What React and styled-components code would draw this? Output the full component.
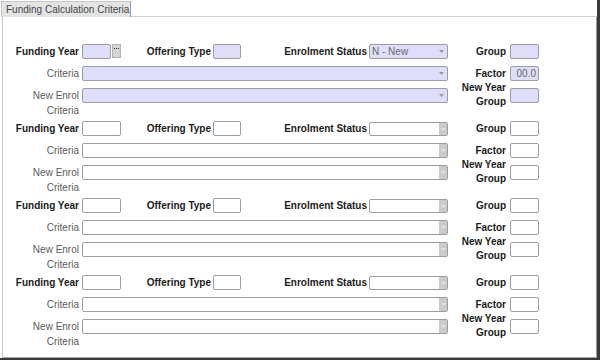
import React from "react";
import styled, { createGlobalStyle, css } from "styled-components";

const GlobalStyle = createGlobalStyle`
  html, body { margin: 0; padding: 0; background: #fff; }
  body { font-family: "Liberation Sans", Arial, sans-serif; }
`;

const Window = styled.div`
  width: 600px;
  height: 360px;
  box-sizing: border-box;
  border-right: 3px solid #3a3a3a;
  border-bottom: 2px solid #3a3a3a;
  padding: 1px 0 0 1px;
  display: flex;
  flex-direction: column;
  background: #fff;
`;

const TabStrip = styled.div`
  display: flex;
  height: 16px;
`;

const Tab = styled.div`
  width: 130px;
  box-sizing: border-box;
  background: #e4e4e4;
  border: 1px solid #c6c6c6;
  border-right-color: #9e9e9e;
  border-bottom: none;
  padding-left: 4px;
  font-size: 10px;
  line-height: 15px;
  color: #454545;
  white-space: nowrap;
`;

const TabRule = styled.div`
  flex: 1;
  border-bottom: 1px solid #d0d0d0;
`;

const Panel = styled.div`
  flex: 1;
  margin-left: 1px;
  border: 1px solid #c8c8c8;
  border-top: none;
  border-right-color: #9c9c9c;
  border-bottom-color: #a4a4a4;
  padding-top: 27px;
  display: flex;
  flex-direction: column;
  gap: 18px;
`;

const Block = styled.div`
  display: grid;
  grid-template-columns: 79px 39px 92px 28px 128px 79px 62px 29px;
  grid-template-rows: 15px 15px 15px;
  row-gap: 7px;
  align-items: center;
`;

const Label = styled.div`
  font-size: 10px;
  line-height: 15px;
  text-align: right;
  white-space: nowrap;
  padding-right: ${(p) => p.$pr ?? 3}px;
  color: ${(p) => (p.$bold ? "#1b1b1b" : "#5a5a5a")};
  font-weight: ${(p) => (p.$bold ? 700 : 400)};
  ${(p) =>
    p.$stack &&
    css`
      align-self: start;
    `}
  ${(p) =>
    p.$centerStack &&
    css`
      align-self: start;
      line-height: 14px;
      margin-top: -7px;
    `}
`;

const fieldBase = css`
  box-sizing: border-box;
  height: 15px;
  border: 1px solid #9c9ca4;
  border-radius: 2px;
  background: ${(p) => (p.$filled ? "#dedefa" : "#ffffff")};
  font-size: 10px;
  line-height: 13px;
  color: #6a6a6a;
`;

const TextBox = styled.div`
  ${fieldBase}
  width: ${(p) => p.$w}px;
  text-align: right;
  padding-right: 2px;
`;

const YearField = styled.div`
  display: flex;
  gap: 1px;
`;

const EllipsisButton = styled.div`
  box-sizing: border-box;
  width: 9px;
  height: 14px;
  background: #d6d6d6;
  border: 1px solid #b4b4b4;
  display: flex;
  justify-content: center;
  padding-top: 3px;
`;

const Select = styled.div`
  ${fieldBase}
  display: flex;
  grid-column: ${(p) => p.$span || "auto"};
  ${(p) =>
    p.$compact &&
    css`
      height: 14px;
      align-self: end;
    `}
`;

const SelectValue = styled.div`
  flex: 1;
  padding-left: 2px;
  white-space: nowrap;
  overflow: hidden;
`;

const SelectArrow = styled.div`
  width: 8px;
  display: flex;
  align-items: center;
  justify-content: center;
  background: ${(p) => (p.$filled ? "transparent" : "#cacaca")};
  margin-right: ${(p) => (p.$filled ? 2 : 0)}px;
`;

const Dots = () => (
  <svg width="5" height="2" viewBox="0 0 5 2">
    <rect x="0" y="0" width="1" height="1" fill="#333" />
    <rect x="2" y="0" width="1" height="1" fill="#333" />
    <rect x="4" y="0" width="1" height="1" fill="#333" />
  </svg>
);

const Caret = ({ color }) => (
  <svg width="5" height="3" viewBox="0 0 5 3">
    <path d="M0 0 H5 L2.5 3 Z" fill={color} />
  </svg>
);

const Dropdown = ({ filled, value, span, compact }) => (
  <Select $filled={filled} $span={span} $compact={compact}>
    <SelectValue>{value}</SelectValue>
    <SelectArrow $filled={filled}>
      <Caret color={filled ? "#9a9a9a" : "#e2e2e2"} />
    </SelectArrow>
  </Select>
);

const CriteriaBlock = ({ filled }) => (
  <Block>
    <Label $bold>Funding Year</Label>
    {filled ? (
      <YearField>
        <TextBox $w={30} $filled />
        <EllipsisButton>
          <Dots />
        </EllipsisButton>
      </YearField>
    ) : (
      <TextBox $w={39} />
    )}
    <Label $bold $pr={2}>Offering Type</Label>
    <TextBox $w={28} $filled={filled} />
    <Label $bold $pr={2}>Enrolment Status</Label>
    <Dropdown filled={filled} value={filled ? "N - New" : ""} compact={!filled} />
    <Label $bold $pr={4}>Group</Label>
    <TextBox $w={29} $filled={filled} />

    <Label>Criteria</Label>
    <Dropdown filled={filled} span="2 / 7" />
    <Label $bold $pr={4}>Factor</Label>
    <TextBox $w={29} $filled={filled}>{filled ? "00.0" : ""}</TextBox>

    <Label $stack>
      New Enrol
      <br />
      Criteria
    </Label>
    <Dropdown filled={filled} span="2 / 7" />
    <Label $bold $pr={4} $centerStack>
      New Year
      <br />
      Group
    </Label>
    <TextBox $w={29} $filled={filled} />
  </Block>
);

export default function App() {
  const blocks = [true, false, false, false];
  return (
    <>
      <GlobalStyle />
      <Window>
        <TabStrip>
          <Tab>Funding Calculation Criteria</Tab>
          <TabRule />
        </TabStrip>
        <Panel>
          {blocks.map((filled, i) => (
            <CriteriaBlock key={i} filled={filled} />
          ))}
        </Panel>
      </Window>
    </>
  );
}
